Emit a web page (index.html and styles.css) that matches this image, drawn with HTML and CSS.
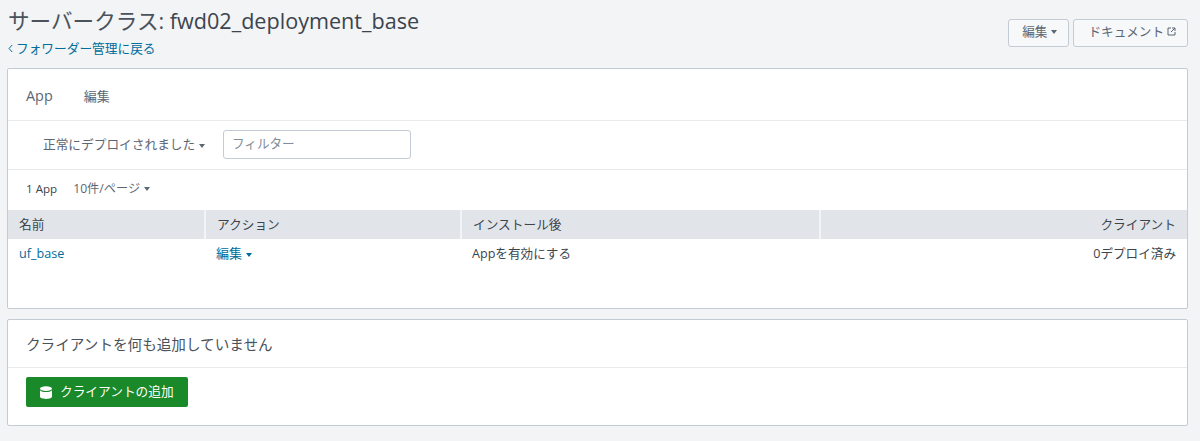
FILE: index.html
```html
<!DOCTYPE html>
<html lang="ja">
<head>
<meta charset="utf-8">
<title>サーバークラス</title>
<link rel="stylesheet" href="styles.css">
</head>
<body>
<header class="page-head">
  <div class="head-text">
    <h1 class="title">サーバークラス: <span class="title-name">fwd02_deployment_base</span></h1>
    <a class="back" href="#"><svg class="back-icon" width="5" height="9" viewBox="0 0 5 9"><path d="M4.2 1 1 4.5 4.2 8" fill="none" stroke="currentColor" stroke-width="1"/></svg>フォワーダー管理に戻る</a>
  </div>
  <div class="head-actions">
    <button class="btn">編集<span class="caret"></span></button>
    <button class="btn btn-doc">ドキュメント<svg class="ext" width="9" height="9" viewBox="0 0 9 9"><path d="M4 1H1v7h7V5M5 1h3v3M8 1 4 5" fill="none" stroke="currentColor" stroke-width="1"/></svg></button>
  </div>
</header>
<main>
  <section class="panel panel-apps">
    <nav class="tabs"><span class="tab tab-active">App</span><span class="tab">編集</span></nav>
    <div class="filter-row">
      <span class="status">正常にデプロイされました<span class="caret"></span></span>
      <div class="filter-input">フィルター</div>
    </div>
    <div class="count-row">
      <span class="count">1 App</span>
      <span class="per-page">10件/ページ<span class="caret"></span></span>
    </div>
    <table class="table">
      <thead>
        <tr><th class="col-name">名前</th><th class="col-action">アクション</th><th class="col-after">インストール後</th><th class="col-client">クライアント</th></tr>
      </thead>
      <tbody>
        <tr><td><a class="link" href="#">uf_base</a></td><td><a class="link link-edit" href="#">編集<span class="caret caret-link"></span></a></td><td>Appを有効にする</td><td class="col-client">0デプロイ済み</td></tr>
      </tbody>
    </table>
  </section>
  <section class="panel panel-clients">
    <h2 class="empty-title">クライアントを何も追加していません</h2>
    <div class="add-row">
      <button class="btn-add"><svg class="db" width="12" height="13" viewBox="0 0 12 13"><ellipse cx="6" cy="2.6" rx="6" ry="2.4" fill="#fff"/><path d="M0 4.2C1 5.6 3.4 6 6 6s5-.4 6-1.8V10.6C12 12 9.3 13 6 13S0 12 0 10.6Z" fill="#fff"/></svg><span class="btn-add-label">クライアントの追加</span></button>
    </div>
  </section>
</main>
</body>
</html>
```
FILE: styles.css
```css
* { box-sizing: border-box; }
html, body { margin: 0; height: 441px; overflow: hidden; }
body {
  background: #f2f4f5;
  color: #3c444d;
  font-family: "Open Sans", "Noto Sans CJK JP", sans-serif;
  font-size: 12.6px;
  padding: 0 12px 0 7px;
}
.page-head { display: flex; justify-content: space-between; height: 68px; }
.head-text { padding: 9px 0 0 1px; }
.title { margin: 0; font-size: 21.6px; font-weight: 400; line-height: 24px; color: #4a525b; }
.title-name { color: #3c444d; }
.back { display: flex; align-items: center; gap: 3px; margin-top: 6px; font-size: 12.7px; line-height: 18px; color: #006d9c; text-decoration: none; }
.head-actions { display: flex; gap: 4px; padding-top: 19px; }
.btn {
  height: 28px;
  padding: 0 11px 3px 13px;
  border: 1px solid #c3cbd4;
  border-radius: 3px;
  background: #f7f8fa;
  color: #5c6773;
  font: inherit;
  font-size: 12.6px;
  line-height: 18px;
}
.btn-doc { padding: 0 11px 3px 14px; }
.ext { margin-left: 3px; }
.caret {
  display: inline-block;
  margin-left: 4px;
  vertical-align: middle;
  border-left: 3.5px solid transparent;
  border-right: 3.5px solid transparent;
  border-top: 4.5px solid #5c6773;
}
.caret-link { border-top-color: #006d9c; }
.panel { background: #fff; border: 1px solid #c3cbd4; border-radius: 2px; }
.panel-apps { height: 241px; }
.panel-clients { height: 107px; margin-top: 10px; }
.tabs { display: flex; gap: 31px; height: 52px; padding: 18px 0 0 18px; border-bottom: 1px solid #e8ebee; }
.tab { font-size: 13px; line-height: 18px; color: #5c6773; }
.tab-active { font-size: 14.4px; }
.filter-row { display: flex; align-items: center; height: 49px; padding: 0 0 2px 35px; border-bottom: 1px solid #e8ebee; }
.status { font-size: 12.7px; line-height: 18px; color: #5c6773; width: 180px; }
.filter-input {
  width: 188px;
  height: 29px;
  padding-left: 8px;
  border: 1px solid #c3cbd4;
  border-radius: 3px;
  font-size: 12.6px;
  line-height: 25px;
  color: #818d99;
}
.count-row { display: flex; align-items: center; gap: 16px; height: 40px; padding: 0 0 3px 18px; }
.count { font-size: 11.6px; }
.per-page { color: #5c6773; font-size: 12.2px; margin-top: -2px; }
.table { width: 100%; border-collapse: collapse; table-layout: fixed; }
.table th {
  height: 29px;
  padding: 0 11px 2px;
  background: #e1e5ea;
  border-left: 2px solid #f2f4f5;
  font-size: 12.7px;
  line-height: 18px;
  font-weight: 400;
  text-align: left;
  color: #3c444d;
}
.table th:first-child { border-left: 0; }
.table td { height: 29px; padding: 0 11px; font-size: 12.6px; line-height: 18px; color: #3c444d; }
.col-name { width: 197px; }
.col-action { width: 256px; }
.col-after { width: 359px; }
.table .col-client { text-align: right; }
.link { color: #006d9c; text-decoration: none; }
.link-edit { font-size: 13px; }
.empty-title { margin: 0; height: 48px; padding: 14px 0 0 18px; font-size: 14.6px; font-weight: 400; line-height: 20px; color: #4a525b; border-bottom: 1px solid #e8ebee; }
.add-row { padding: 9px 0 0 18px; }
.btn-add {
  display: flex;
  align-items: center;
  gap: 8px;
  height: 30px;
  width: 162px;
  padding: 0 0 0 14px;
  border: 0;
  border-radius: 2px;
  background: #1a8929;
  color: #fff;
  font: inherit;
  font-size: 12.7px;
}
.btn-add-label { line-height: 18px; margin-top: -3px; }
```
